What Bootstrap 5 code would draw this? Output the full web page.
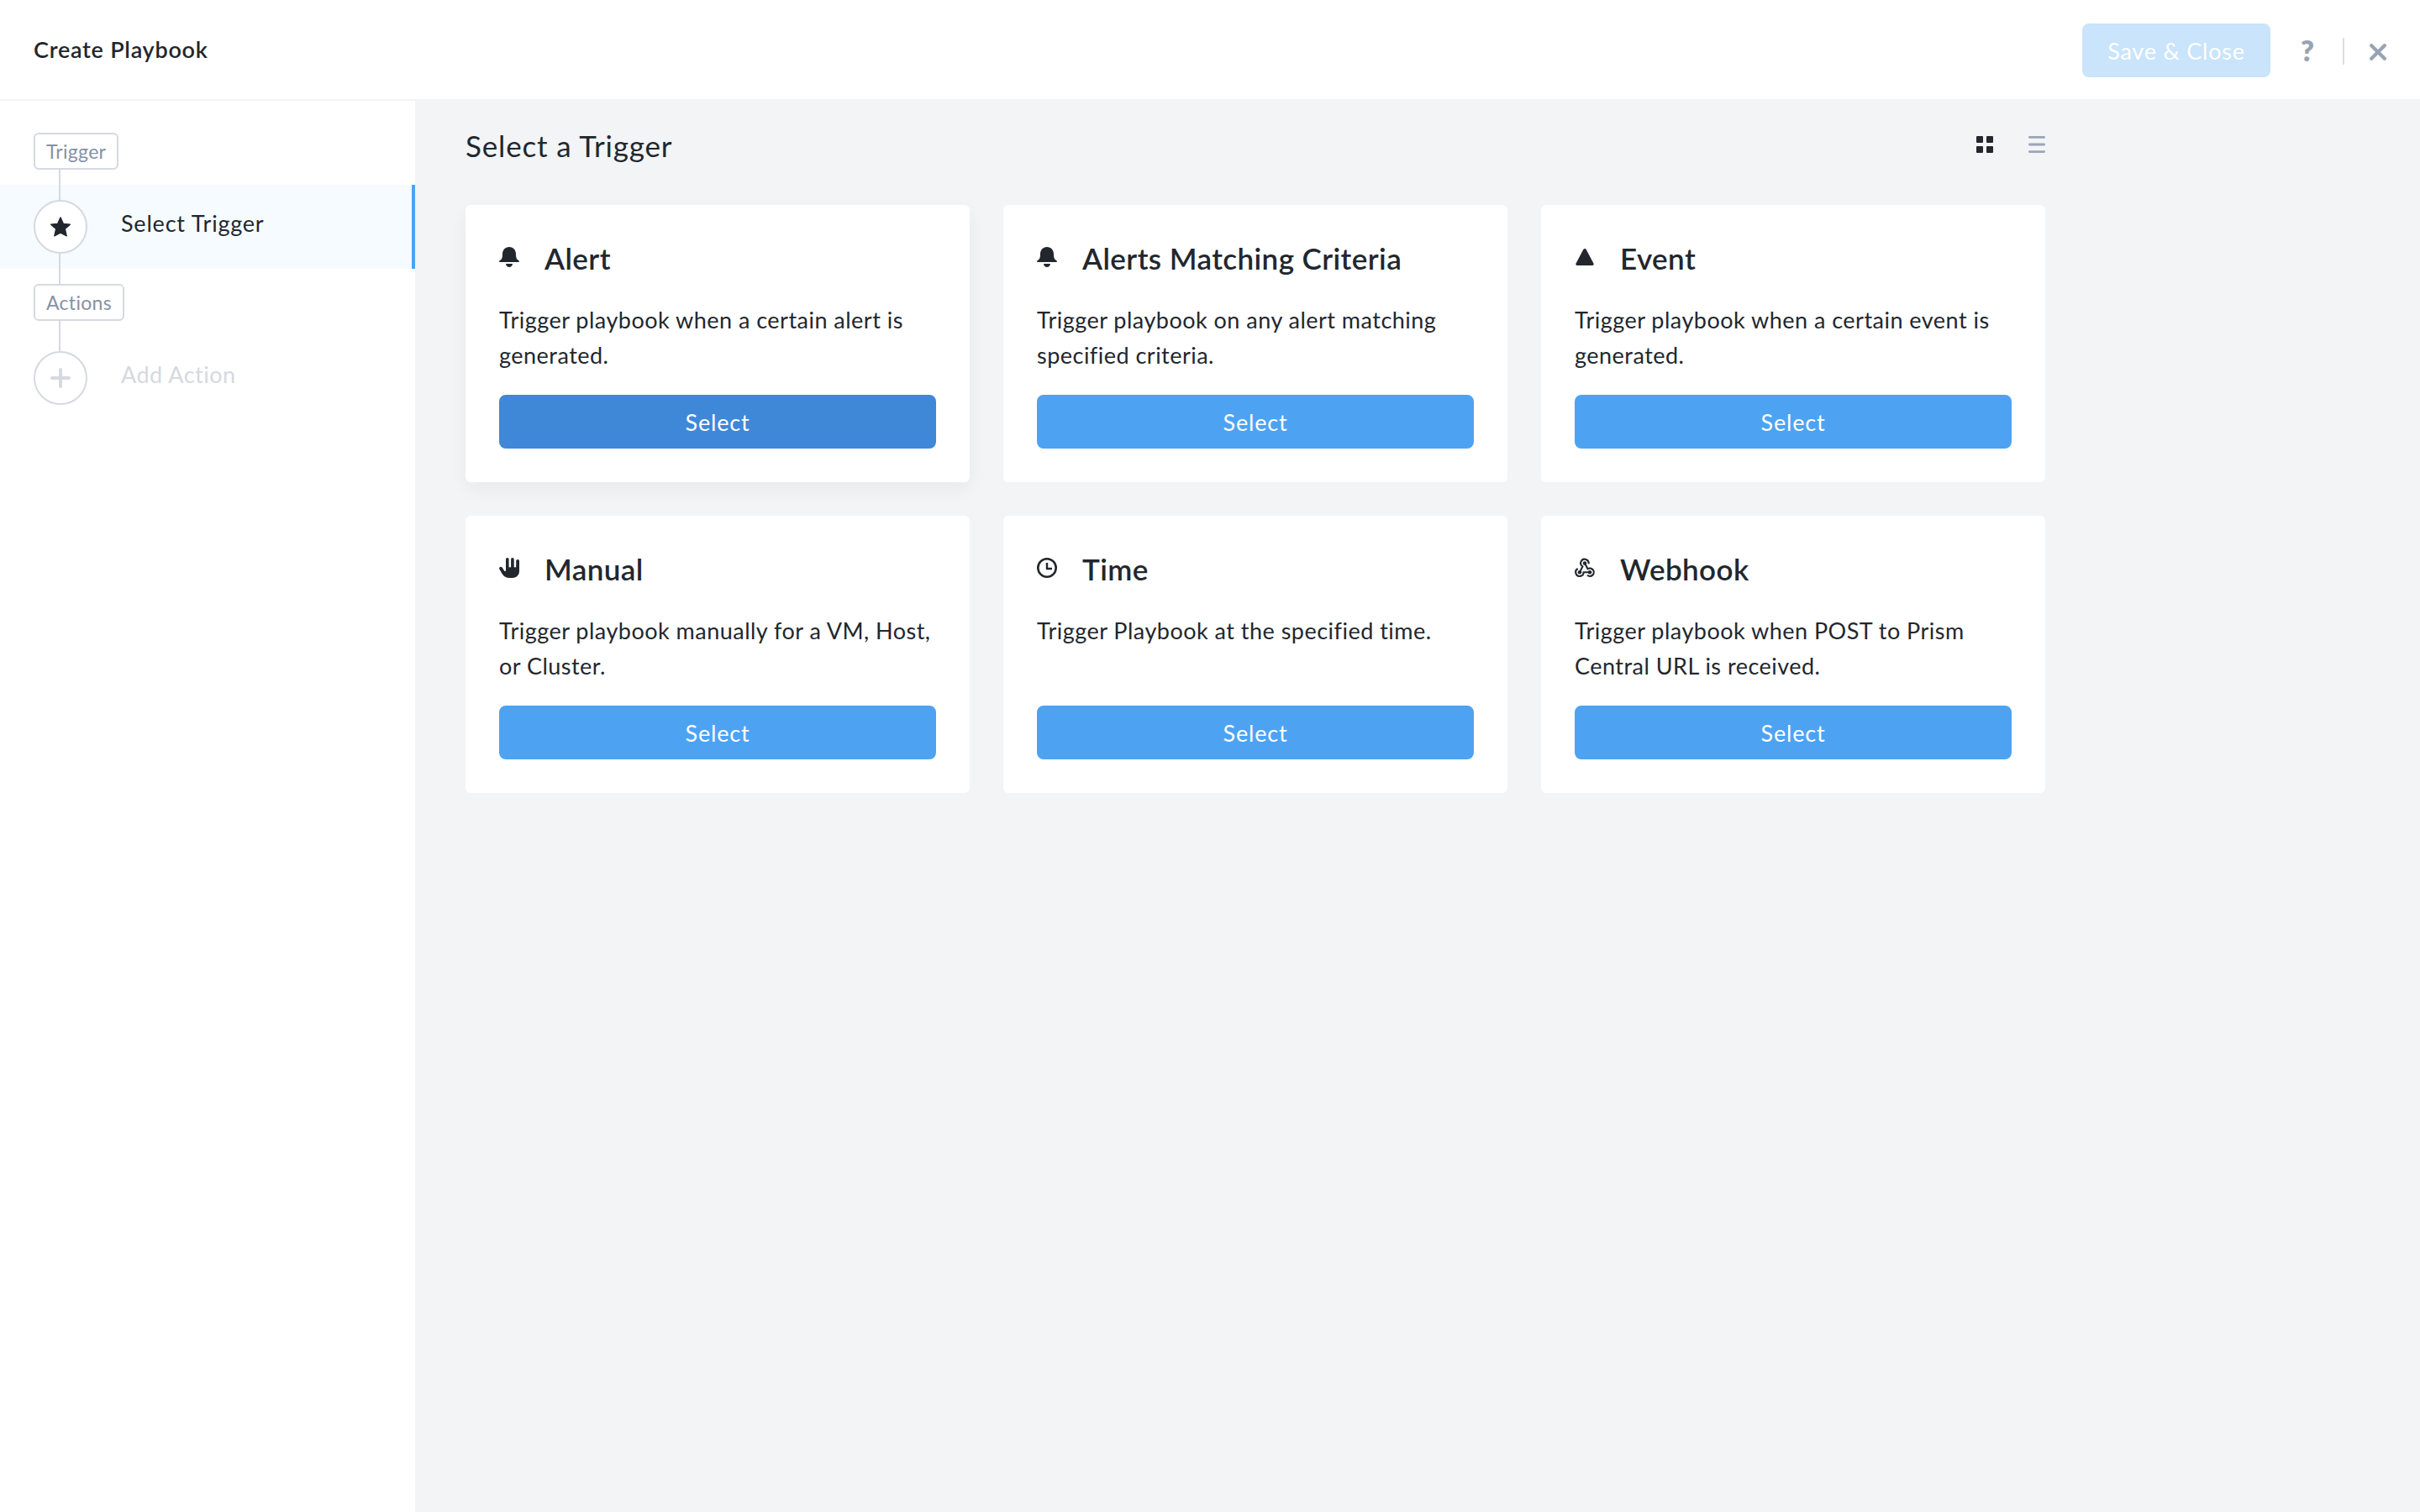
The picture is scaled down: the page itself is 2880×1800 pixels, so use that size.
<!DOCTYPE html>
<html lang="en">
<head>
<meta charset="utf-8">
<title>Create Playbook</title>
<link rel="stylesheet" href="https://cdn.jsdelivr.net/npm/bootstrap@5.3.0/dist/css/bootstrap.min.css">
<style>
  body { font-family: Lato, "Open Sans", sans-serif; font-size: 27px; letter-spacing: .48px; line-height: 42px; color: #22272e; background: #f2f4f6; }
  svg { display: block; flex: none; }
  .topbar { height: 120px; padding: 2px 40px 0; border-bottom: 2px solid #f2f4f6; }
  .topbar-title { font-size: 27px; font-weight: 600; letter-spacing: .75px; padding-bottom: 3px; line-height: 42px; }
  .btn-main { --bs-btn-bg: #4da3f2; --bs-btn-border-color: #4da3f2; --bs-btn-color: #fff; --bs-btn-font-size: 27px; --bs-btn-line-height: 61px; --bs-btn-padding-y: 0; --bs-btn-border-width: 2px; --bs-btn-border-radius: 8px;
    --bs-btn-hover-bg: #3f88d8; --bs-btn-hover-border-color: #3f88d8; --bs-btn-active-bg: #3f88d8; --bs-btn-active-border-color: #3f88d8; --bs-btn-active-color: #fff;
    --bs-btn-disabled-bg: #c9e4fb; --bs-btn-disabled-border-color: #c9e4fb; --bs-btn-disabled-color: #fff; --bs-btn-disabled-opacity: 1; height: 64px; letter-spacing: .8px; }
  .btn-save { width: 224px; margin-right: 35px; }
  .help { font-size: 34px; font-weight: 800; color: #98a3b4; letter-spacing: 0; width: 18px; text-align: center; margin-right: 33px; }
  .divider { width: 2px; height: 32px; background: #d9dee3; margin: 2px 30px 0 0; }
  .close-icon { margin-top: 4px; }
  .sidebar { width: 494px; padding-top: 38px; }
  .step-tag { height: 44px; margin-left: 40px; padding: 0 13px; border: 2px solid #d5d9e0; border-radius: 6px; color: #8592a5; font-size: 23px; line-height: 41px; letter-spacing: .3px; }
  .connector { width: 2px; height: 18px; margin-left: 70px; background: #d5d9e0; }
  .step-row { height: 100px; padding-left: 40px; }
  .step-row.current { background: #f6fbff; border-right: 4px solid #4da3f2; }
  .step-rail { width: 64px; margin-right: 40px; }
  .step-rail .connector { margin-left: 30px; }
  .step-node { width: 64px; height: 64px; border: 2px solid #d5d9e0; border-radius: 50%; }
  .step-label { padding-bottom: 8px; letter-spacing: .8px; }
  .pending { color: #d5d9e0; }
  .pending .step-label { letter-spacing: .5px; }
  .content-area { padding: 31px 0 0 60px; }
  .content-inner { width: 1880px; }
  .page-title { font-size: 35px; line-height: 45px; letter-spacing: .85px; }
  .view-icons { gap: 42px; padding-bottom: 3px; }
  .trigger-grid { gap: 40px; margin-top: 48px; }
  .trigger-card { width: 600px; height: 330px; padding: 40px; border: 0; border-radius: 6px; }
  .trigger-card.hovered { box-shadow: 0 8px 20px rgba(34,39,46,.05); }
  .trigger-head { gap: 30px; height: 45px; }
  .trigger-head svg { margin-bottom: 1px; }
  .trigger-name { font-size: 35px; font-weight: 600; line-height: 45px; letter-spacing: .42px; padding-top: 1px; }
  .trigger-text { height: 84px; margin: 31px 0 26px; white-space: nowrap; }
</style>
<script src="https://cdn.jsdelivr.net/npm/bootstrap@5.3.0/dist/js/bootstrap.bundle.min.js"></script>
</head>
<body class="vh-100 d-flex flex-column overflow-hidden">
<svg class="d-none">
  <symbol id="bell" viewBox="0 0 24 24"><path d="M12 0C7 0 4 3.800 4 8.500c0 4-.7 6-2.700 7.200C.4 16.300 0 16.700 0 17.300c0 .4.3.7.8.7h22.400c.5 0 .8-.3.8-.7 0-.6-.4-1-1.300-1.600C20.700 14.500 20 12.500 20 8.500 20 3.800 17 0 12 0zM8 20h8c0 2.300-1.800 4-4 4s-4-1.700-4-4z"/></symbol>
  <symbol id="triangle" viewBox="0 0 24 24"><path d="M10.300 3Q12 .8 13.700 3L22.400 19.500Q23.300 22 21 22H3Q.7 22 1.600 19.500z"/></symbol>
  <symbol id="hand" viewBox="0 0 24 24"><path d="M8 1.700a1.800 1.700 0 0 1 3.600 0V10.300a1.200 1.200 0 0 0 2.500 0V1.700a1.800 1.700 0 0 1 3.600 0V10.300a1.200 1.200 0 0 0 2.500 0V3.700a1.900 1.700 0 0 1 3.800 0V15.500C24 21 20.500 24 15.500 24H12.500C8.500 24 5.500 22.500 3.500 19L.3 13.500C-.7 11.200 2.300 9.800 3.800 11.800L6.200 15.600C6.800 16.500 8 16.200 8 15z"/></symbol>
  <symbol id="clock" viewBox="0 0 24 24"><g fill="none" stroke="currentColor"><circle cx="12" cy="12" r="10.700" stroke-width="2.600"/><path d="M12 6v7h6" stroke-width="2.400"/></g></symbol>
  <symbol id="webhook" viewBox="0 0 24 24"><g fill="none" stroke="currentColor" stroke-width="2.100"><path d="M16.500 7.300A4.700 4.700 0 1 0 9.400 10.400L6 17.200"/><path d="M3.800 13A4.700 4.700 0 1 0 10.600 17.200H18"/><path d="M15 20.800A4.700 4.700 0 1 0 15.600 13.200L12 6.500"/></g><circle cx="12" cy="6.500" r="2.300"/><circle cx="6" cy="17.200" r="2.300"/><circle cx="18" cy="17.200" r="2.300"/></symbol>
</svg>

<header class="topbar bg-white d-flex align-items-center flex-shrink-0">
  <h1 class="topbar-title mb-0 me-auto">Create Playbook</h1>
  <button class="btn btn-main btn-save" disabled>Save &amp; Close</button>
  <span class="help">?</span>
  <span class="divider"></span>
  <svg class="close-icon" width="20" height="20" viewBox="0 0 20 20" stroke="#98a3b4" stroke-width="4.200" stroke-linecap="round"><path d="M2.200 2.200l15.600 15.600M17.800 2.200L2.200 17.800"/></svg>
</header>

<div class="d-flex flex-grow-1">
  <aside class="sidebar bg-white d-flex flex-column align-items-stretch flex-shrink-0">
    <div class="step-tag align-self-start">Trigger</div>
    <div class="connector"></div>
    <div class="step-row current d-flex align-items-center">
      <div class="step-rail">
        <div class="connector"></div>
        <div class="step-node bg-white d-flex align-items-center justify-content-center">
          <svg width="24" height="24" viewBox="0 0 24 24" fill="#22272e" stroke="#22272e" stroke-width="1.200" stroke-linejoin="round"><path d="M12 .8l3.400 7.500 8 .9-6 5.400 1.900 8.300L12 19.300l-7.300 3.600 1.900-8.300-6-5.400 8-.9z"/></svg>
        </div>
        <div class="connector"></div>
      </div>
      <span class="step-label">Select Trigger</span>
    </div>
    <div class="connector"></div>
    <div class="step-tag align-self-start">Actions</div>
    <div class="connector"></div>
    <div class="step-row pending d-flex align-items-center">
      <div class="step-rail h-100">
        <div class="connector"></div>
        <div class="step-node d-flex align-items-center justify-content-center">
          <svg width="24" height="24" viewBox="0 0 24 24" stroke="#d5d9e0" stroke-width="4" stroke-linecap="round"><path d="M12 2v20M2 12h20"/></svg>
        </div>
      </div>
      <span class="step-label">Add Action</span>
    </div>
  </aside>

  <main class="content-area flex-grow-1">
    <div class="content-inner">
      <div class="d-flex align-items-center">
        <h2 class="page-title fw-normal mb-0 me-auto">Select a Trigger</h2>
        <div class="view-icons d-flex">
          <svg width="20" height="20" viewBox="0 0 20 20" fill="#22272e"><rect width="8" height="8" rx="1"/><rect x="12" width="8" height="8" rx="1"/><rect y="12" width="8" height="8" rx="1"/><rect x="12" y="12" width="8" height="8" rx="1"/></svg>
          <svg width="20" height="20" viewBox="0 0 20 20" stroke="#9aa5b8" stroke-width="2.800" stroke-linecap="round"><path d="M1.400 1.400h17.200M1.400 10h17.200M1.400 18.600h17.200"/></svg>
        </div>
      </div>

      <div class="trigger-grid d-flex flex-wrap">
        <div class="card trigger-card hovered">
          <div class="trigger-head d-flex align-items-center"><svg width="24" height="24" fill="currentColor"><use href="#bell"/></svg><h3 class="trigger-name mb-0">Alert</h3></div>
          <p class="trigger-text">Trigger playbook when a certain alert is<br>generated.</p>
          <button class="btn btn-main active w-100">Select</button>
        </div>
        <div class="card trigger-card">
          <div class="trigger-head d-flex align-items-center"><svg width="24" height="24" fill="currentColor"><use href="#bell"/></svg><h3 class="trigger-name mb-0">Alerts Matching Criteria</h3></div>
          <p class="trigger-text">Trigger playbook on any alert matching<br>specified criteria.</p>
          <button class="btn btn-main w-100">Select</button>
        </div>
        <div class="card trigger-card">
          <div class="trigger-head d-flex align-items-center"><svg width="24" height="24" fill="currentColor"><use href="#triangle"/></svg><h3 class="trigger-name mb-0">Event</h3></div>
          <p class="trigger-text">Trigger playbook when a certain event is<br>generated.</p>
          <button class="btn btn-main w-100">Select</button>
        </div>
        <div class="card trigger-card">
          <div class="trigger-head d-flex align-items-center"><svg width="24" height="24" fill="currentColor"><use href="#hand"/></svg><h3 class="trigger-name mb-0">Manual</h3></div>
          <p class="trigger-text">Trigger playbook manually for a VM, Host,<br>or Cluster.</p>
          <button class="btn btn-main w-100">Select</button>
        </div>
        <div class="card trigger-card">
          <div class="trigger-head d-flex align-items-center"><svg width="24" height="24" fill="currentColor"><use href="#clock"/></svg><h3 class="trigger-name mb-0">Time</h3></div>
          <p class="trigger-text">Trigger Playbook at the specified time.</p>
          <button class="btn btn-main w-100">Select</button>
        </div>
        <div class="card trigger-card">
          <div class="trigger-head d-flex align-items-center"><svg width="24" height="24" fill="currentColor"><use href="#webhook"/></svg><h3 class="trigger-name mb-0">Webhook</h3></div>
          <p class="trigger-text">Trigger playbook when POST to Prism<br>Central URL is received.</p>
          <button class="btn btn-main w-100">Select</button>
        </div>
      </div>
    </div>
  </main>
</div>
</body>
</html>
